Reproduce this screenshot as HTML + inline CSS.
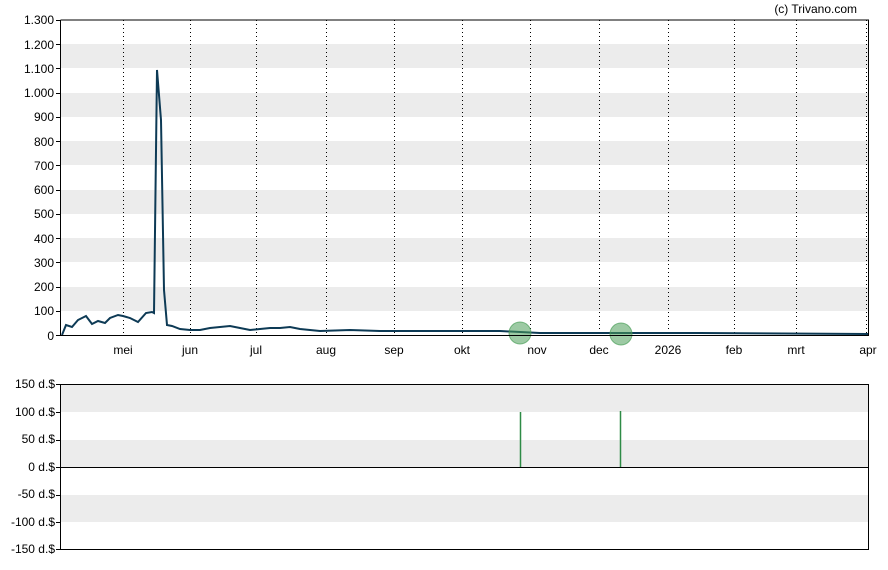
<!DOCTYPE html>
<html><head><meta charset="utf-8"><style>
body{margin:0;background:#fff;}
svg text{font-family:"Liberation Sans",sans-serif;font-size:12px;fill:#000;}
</style></head><body>
<svg width="888" height="565" xmlns="http://www.w3.org/2000/svg">
<rect width="888" height="565" fill="#fff"/>
<text x="857" y="13" text-anchor="end" font-size="11">(c) Trivano.com</text>
<g fill="#ececec">
<rect x="61" y="44" width="807" height="24"/>
<rect x="61" y="93" width="807" height="24"/>
<rect x="61" y="141" width="807" height="24"/>
<rect x="61" y="190" width="807" height="24"/>
<rect x="61" y="238" width="807" height="24"/>
<rect x="61" y="287" width="807" height="24"/>
<rect x="61" y="385" width="807" height="27"/>
<rect x="61" y="440" width="807" height="27"/>
<rect x="61" y="495" width="807" height="27"/>
</g>
<g stroke="#000" stroke-dasharray="1,3" stroke-width="1">
<path d="M123.5 20V335M190.5 20V335M256.5 20V335M326.5 20V335M394.5 20V335M462.5 20V335M530.5 20V335M599.5 20V335M668.5 20V335M734.5 20V335M796.5 20V335M866.5 20V335"/>
</g>
<path d="M62 335L66 325L72 327L78 320L86 316L92 324L98 321L105 323L110 318L118 315L123 316L130 318L138 322L146 313L152 312L154 313L157 70L161 120L164 290L167 325L172 326L180 329L190 330L200 330L210 328L220 327L230 326L240 328L250 330L260 329L270 328L280 328L290 327L300 329L320 331L350 330L380 331L420 331L460 331L500 331L540 333L600 333L700 333L868 334" fill="none" stroke="#0d3a55" stroke-width="2"/>
<circle cx="520" cy="333" r="11" fill="#4c9f5a" fill-opacity="0.55" stroke="#4c9f5a" stroke-opacity="0.7"/>
<circle cx="621" cy="334" r="11" fill="#4c9f5a" fill-opacity="0.55" stroke="#4c9f5a" stroke-opacity="0.7"/>
<path d="M60.5 20V335.5H868.5V20H60.5" fill="none" stroke="#000"/>
<g text-anchor="end">
<text x="54" y="24">1.300</text><text x="54" y="49">1.200</text><text x="54" y="73">1.100</text><text x="54" y="97">1.000</text><text x="54" y="121">900</text><text x="54" y="146">800</text><text x="54" y="170">700</text><text x="54" y="194">600</text><text x="54" y="218">500</text><text x="54" y="243">400</text><text x="54" y="267">300</text><text x="54" y="291">200</text><text x="54" y="315">100</text><text x="54" y="340">0</text>
</g>
<g stroke="#000"><path d="M56 20.5H61M56 44.5H61M56 68.5H61M56 93.5H61M56 117.5H61M56 141.5H61M56 165.5H61M56 190.5H61M56 214.5H61M56 238.5H61M56 262.5H61M56 287.5H61M56 311.5H61M56 335.5H61"/></g>
<g text-anchor="middle">
<text x="123" y="354">mei</text><text x="190" y="354">jun</text><text x="256" y="354">jul</text><text x="326" y="354">aug</text><text x="394" y="354">sep</text><text x="462" y="354">okt</text><text x="537" y="354">nov</text><text x="599" y="354">dec</text><text x="668" y="354">2026</text><text x="734" y="354">feb</text><text x="796" y="354">mrt</text><text x="868" y="354">apr</text>
</g>
<path d="M520.5 412V467M620.5 411V467" stroke="#2e8b46" stroke-width="1.5"/>
<path d="M60.5 384.5H868.5V549.5H60.5Z" fill="none" stroke="#000"/>
<path d="M60 467.5H868" stroke="#000"/>
<g text-anchor="end" font-size="11">
<text x="55" y="388">150 d.$</text><text x="55" y="416">100 d.$</text><text x="55" y="443">50 d.$</text><text x="55" y="471">0 d.$</text><text x="55" y="498">-50 d.$</text><text x="55" y="526">-100 d.$</text><text x="55" y="553">-150 d.$</text>
</g>
<g stroke="#000"><path d="M56 384.5H61M56 412.5H61M56 440.5H61M56 467.5H61M56 495.5H61M56 522.5H61M56 549.5H61"/></g>
</svg>
</body></html>
